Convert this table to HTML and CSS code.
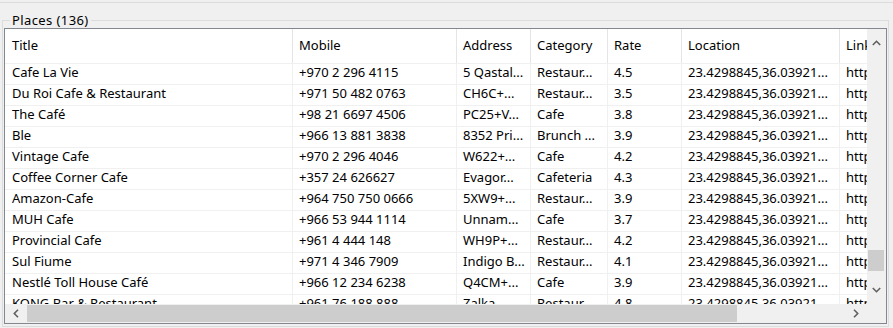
FILE: index.html
```html
<!DOCTYPE html>
<html>
<head>
<meta charset="utf-8">
<link rel="stylesheet" href="styles.css">
</head>
<body>
<div class="topbar"></div>
<fieldset class="group">
  <legend class="group-title">Places (136)</legend>
  <div class="listview">
    <div class="viewport">
      <div class="row header">
        <div class="c c1">Title</div><div class="c c2">Mobile</div><div class="c c3">Address</div><div class="c c4">Category</div><div class="c c5">Rate</div><div class="c c6">Location</div><div class="c c7">Link</div>
      </div>
      <div class="row"><div class="c c1">Cafe La Vie</div><div class="c c2">+970 2 296 4115</div><div class="c c3">5 Qastal...</div><div class="c c4">Restaur...</div><div class="c c5">4.5</div><div class="c c6">23.4298845,36.03921...</div><div class="c c7">https://maps</div></div>
      <div class="row"><div class="c c1">Du Roi Cafe &amp; Restaurant</div><div class="c c2">+971 50 482 0763</div><div class="c c3">CH6C+...</div><div class="c c4">Restaur...</div><div class="c c5">3.5</div><div class="c c6">23.4298845,36.03921...</div><div class="c c7">https://maps</div></div>
      <div class="row"><div class="c c1">The Café</div><div class="c c2">+98 21 6697 4506</div><div class="c c3">PC25+V...</div><div class="c c4">Cafe</div><div class="c c5">3.8</div><div class="c c6">23.4298845,36.03921...</div><div class="c c7">https://maps</div></div>
      <div class="row"><div class="c c1">Ble</div><div class="c c2">+966 13 881 3838</div><div class="c c3">8352 Pri...</div><div class="c c4">Brunch ...</div><div class="c c5">3.9</div><div class="c c6">23.4298845,36.03921...</div><div class="c c7">https://maps</div></div>
      <div class="row"><div class="c c1">Vintage Cafe</div><div class="c c2">+970 2 296 4046</div><div class="c c3">W622+...</div><div class="c c4">Cafe</div><div class="c c5">4.2</div><div class="c c6">23.4298845,36.03921...</div><div class="c c7">https://maps</div></div>
      <div class="row"><div class="c c1">Coffee Corner Cafe</div><div class="c c2">+357 24 626627</div><div class="c c3">Evagor...</div><div class="c c4">Cafeteria</div><div class="c c5">4.3</div><div class="c c6">23.4298845,36.03921...</div><div class="c c7">https://maps</div></div>
      <div class="row"><div class="c c1">Amazon-Cafe</div><div class="c c2">+964 750 750 0666</div><div class="c c3">5XW9+...</div><div class="c c4">Restaur...</div><div class="c c5">3.9</div><div class="c c6">23.4298845,36.03921...</div><div class="c c7">https://maps</div></div>
      <div class="row"><div class="c c1">MUH Cafe</div><div class="c c2">+966 53 944 1114</div><div class="c c3">Unnam...</div><div class="c c4">Cafe</div><div class="c c5">3.7</div><div class="c c6">23.4298845,36.03921...</div><div class="c c7">https://maps</div></div>
      <div class="row"><div class="c c1">Provincial Cafe</div><div class="c c2">+961 4 444 148</div><div class="c c3">WH9P+...</div><div class="c c4">Restaur...</div><div class="c c5">4.2</div><div class="c c6">23.4298845,36.03921...</div><div class="c c7">https://maps</div></div>
      <div class="row"><div class="c c1">Sul Fiume</div><div class="c c2">+971 4 346 7909</div><div class="c c3">Indigo B...</div><div class="c c4">Restaur...</div><div class="c c5">4.1</div><div class="c c6">23.4298845,36.03921...</div><div class="c c7">https://maps</div></div>
      <div class="row"><div class="c c1">Nestlé Toll House Café</div><div class="c c2">+966 12 234 6238</div><div class="c c3">Q4CM+...</div><div class="c c4">Cafe</div><div class="c c5">3.9</div><div class="c c6">23.4298845,36.03921...</div><div class="c c7">https://maps</div></div>
      <div class="row"><div class="c c1">KONG Bar &amp; Restaurant</div><div class="c c2">+961 76 188 888</div><div class="c c3">Zalka...</div><div class="c c4">Restaur...</div><div class="c c5">4.8</div><div class="c c6">23.4298845,36.03921...</div><div class="c c7">https://maps</div></div>
    </div>
    <div class="vscroll">
      <div class="sb-btn vbtn"><svg width="9" height="6" viewBox="0 0 9 6"><polyline points="0.8,5 4.5,1.3 8.2,5" fill="none" stroke="#606060" stroke-width="1.6"/></svg></div>
      <div class="vtrack"><div class="vthumb"></div></div>
      <div class="sb-btn vbtn"><svg width="9" height="6" viewBox="0 0 9 6"><polyline points="0.8,1 4.5,4.7 8.2,1" fill="none" stroke="#606060" stroke-width="1.6"/></svg></div>
    </div>
    <div class="hscroll">
      <div class="sb-btn hbtn"><svg width="6" height="9" viewBox="0 0 6 9"><polyline points="5,0.8 1.3,4.5 5,8.2" fill="none" stroke="#606060" stroke-width="1.6"/></svg></div>
      <div class="htrack"><div class="hthumb"></div></div>
      <div class="sb-btn hbtn"><svg width="6" height="9" viewBox="0 0 6 9"><polyline points="1,0.8 4.7,4.5 1,8.2" fill="none" stroke="#606060" stroke-width="1.6"/></svg></div>
    </div>
    <div class="corner"></div>
  </div>
</fieldset>
</body>
</html>
```
FILE: styles.css
```css
html, body {
  margin: 0;
  padding: 0;
  background: #f0f0f0;
}
body {
  width: 893px;
  height: 328px;
  overflow: hidden;
  font-family: "Noto Sans", "Liberation Sans", sans-serif;
  font-size: 13px;
  color: #000;
}
.topbar {
  height: 2px;
  border-bottom: 1px solid #dcdcdc;
}
.group {
  margin: 10px 4px 0 2px;
  padding: 0 1px 2px 1px;
  border: 1px solid #dcdcdc;
  min-width: 0;
}
.group-title {
  margin-left: 6px;
  padding: 0 2px;
  line-height: 15px;
  font-size: 13px;
  letter-spacing: 0.4px;
}
.listview {
  border: 1px solid #828790;
  background: #fff;
  height: 294px;
  display: grid;
  grid-template-columns: 1fr 19px;
  grid-template-rows: 1fr 19px;
}
.viewport {
  overflow: hidden;
  min-width: 0;
}
.row {
  display: grid;
  grid-template-columns: 288px 164px 74px 77px 74px 158px 120px;
  width: 955px;
  height: 21px;
  box-sizing: border-box;
  border-top: 1px solid #f0f0f0;
  line-height: 17px;
}
.row.header {
  height: 34px;
  border-top: none;
  line-height: 33px;
}
.c {
  box-sizing: border-box;
  border-right: 1px solid #f0f0f0;
  padding-left: 6px;
  white-space: nowrap;
  overflow: hidden;
}
.header .c {
  border-right-color: #e5e5e5;
}
.c1 {
  padding-left: 7px;
}
.vscroll {
  display: flex;
  flex-direction: column;
  background: #f0f0f0;
}
.sb-btn {
  display: flex;
  align-items: center;
  justify-content: center;
}
.vbtn {
  height: 28px;
}
.vtrack {
  flex: 1;
}
.vthumb {
  margin: 193px 2px 0 1px;
  height: 21px;
  background: #cdcdcd;
}
.hscroll {
  display: flex;
  background: #f0f0f0;
}
.hbtn {
  width: 22px;
}
.hscroll .hbtn:last-child {
  width: 23px;
}
.htrack {
  flex: 1;
  display: flex;
  align-items: center;
}
.hthumb {
  width: 710px;
  height: 17px;
  background: #cdcdcd;
}
.corner {
  background: #f0f0f0;
}
```
